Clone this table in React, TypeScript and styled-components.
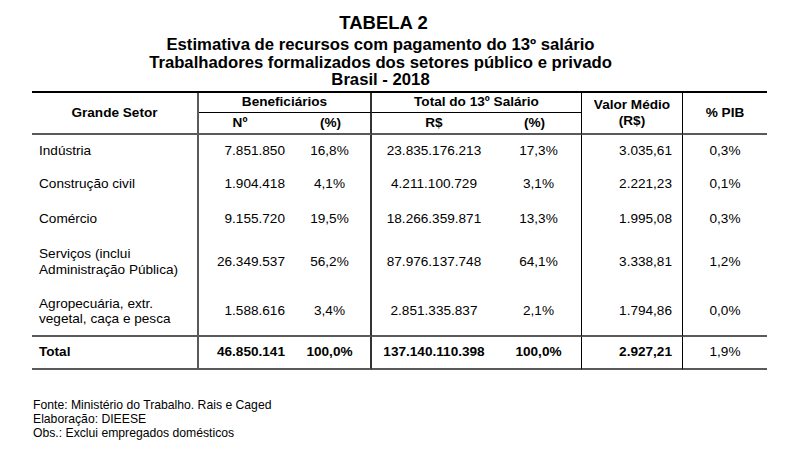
import React from 'react';
import styled, { createGlobalStyle } from 'styled-components';

const GlobalStyle = createGlobalStyle`
  html, body {
    margin: 0;
    padding: 0;
    background: #ffffff;
  }
  body {
    font-family: "Liberation Sans", Arial, sans-serif;
    color: #000000;
  }
`;

const Page = styled.div`
  width: 735px;
  margin-left: 32px;
  padding-top: 13px;
`;

const TitleBlock = styled.header`
  text-align: center;
  font-weight: bold;
  padding-right: 38px;
`;

const TitleMain = styled.div`
  font-size: 18.5px;
  line-height: 20px;
  margin-bottom: 3px;
  padding-left: 6px;
`;

const TitleLine = styled.div`
  font-size: 16.7px;
  line-height: 17.6px;
`;

const Grid = styled.div`
  display: grid;
  grid-template-columns: 167px 92px 81px 124px 86px 101px 84px;
  grid-template-rows: 20px 22px 32px 35px 34px 52px 49px 33px;
  border-top: 2px solid #000;
  margin-top: 2px;
  font-size: 13.6px;
  line-height: 15.6px;
`;

type Align = 'left' | 'right' | 'center';
type Line = 'gray' | 'dark' | 'thin' | 'black';

const lineCss = (l?: Line) => {
  switch (l) {
    case 'gray':
      return '2px solid #5a5a5a';
    case 'dark':
      return '2px solid #333333';
    case 'thin':
      return '1px solid #000000';
    case 'black':
      return '1px solid #000000';
    default:
      return 'none';
  }
};

const Cell = styled.div<{
  $align?: Align;
  $bold?: boolean;
  $rb?: Line;
  $bb?: Line;
  $padL?: number;
  $padR?: number;
  $colSpan?: number;
  $rowSpan?: number;
}>`
  box-sizing: border-box;
  display: flex;
  align-items: center;
  justify-content: ${(p) =>
    p.$align === 'left' ? 'flex-start' : p.$align === 'right' ? 'flex-end' : 'center'};
  text-align: ${(p) => p.$align || 'center'};
  font-weight: ${(p) => (p.$bold ? 'bold' : 'normal')};
  padding-left: ${(p) => p.$padL ?? 0}px;
  padding-right: ${(p) => p.$padR ?? 0}px;
  border-right: ${(p) => lineCss(p.$rb)};
  border-bottom: ${(p) => lineCss(p.$bb)};
  white-space: pre-line;
  grid-column: ${(p) => (p.$colSpan ? `span ${p.$colSpan}` : 'auto')};
  grid-row: ${(p) => (p.$rowSpan ? `span ${p.$rowSpan}` : 'auto')};
`;

const Footnotes = styled.footer`
  margin-top: 28px;
  padding-left: 1px;
  font-size: 12.2px;
  line-height: 14px;
`;

type ColSpec = { align: Align; padL?: number; padR?: number; rb?: Line };

const cols: ColSpec[] = [
  { align: 'left', padL: 7, rb: 'gray' },
  { align: 'right', padR: 6 },
  { align: 'center', padR: 2, rb: 'dark' },
  { align: 'center' },
  { align: 'center', rb: 'thin' },
  { align: 'right', padR: 10, rb: 'thin' },
  { align: 'center' },
];

const rows: string[][] = [
  ['Indústria', '7.851.850', '16,8%', '23.835.176.213', '17,3%', '3.035,61', '0,3%'],
  ['Construção civil', '1.904.418', '4,1%', '4.211.100.729', '3,1%', '2.221,23', '0,1%'],
  ['Comércio', '9.155.720', '19,5%', '18.266.359.871', '13,3%', '1.995,08', '0,3%'],
  ['Serviços (inclui\nAdministração Pública)', '26.349.537', '56,2%', '87.976.137.748', '64,1%', '3.338,81', '1,2%'],
  ['Agropecuária, extr.\nvegetal, caça e pesca', '1.588.616', '3,4%', '2.851.335.837', '2,1%', '1.794,86', '0,0%'],
];

const totalRow = ['Total', '46.850.141', '100,0%', '137.140.110.398', '100,0%', '2.927,21', '1,9%'];

export default function App() {
  return (
    <>
      <GlobalStyle />
      <Page>
        <TitleBlock>
          <TitleMain>TABELA 2</TitleMain>
          <TitleLine>Estimativa de recursos com pagamento do 13º salário</TitleLine>
          <TitleLine>Trabalhadores formalizados dos setores público e privado</TitleLine>
          <TitleLine>Brasil - 2018</TitleLine>
        </TitleBlock>

        <Grid>
          <Cell $bold $rowSpan={2} $rb="gray" $bb="gray">Grande Setor</Cell>
          <Cell $bold $colSpan={2} $rb="dark" $bb="black">Beneficiários</Cell>
          <Cell $bold $colSpan={2} $rb="thin" $bb="black">Total do 13º Salário</Cell>
          <Cell $bold $rowSpan={2} $rb="thin" $bb="gray">{'Valor Médio\n(R$)'}</Cell>
          <Cell $bold $rowSpan={2} $bb="gray">% PIB</Cell>

          <Cell $bold $bb="gray" $padR={10}>Nº</Cell>
          <Cell $bold $bb="gray" $rb="dark">(%)</Cell>
          <Cell $bold $bb="gray">R$</Cell>
          <Cell $bold $bb="gray" $padR={8} $rb="thin">(%)</Cell>

          {rows.map((row, ri) =>
            row.map((value, ci) => (
              <Cell
                key={`${ri}-${ci}`}
                $align={cols[ci].align}
                $padL={cols[ci].padL}
                $padR={cols[ci].padR}
                $rb={cols[ci].rb}
                $bb={ri === rows.length - 1 ? 'gray' : undefined}
              >
                {value}
              </Cell>
            ))
          )}

          {totalRow.map((value, ci) => (
            <Cell
              key={`t-${ci}`}
              $align={cols[ci].align}
              $padL={cols[ci].padL}
              $padR={cols[ci].padR}
              $rb={cols[ci].rb}
              $bb="gray"
              $bold={ci !== totalRow.length - 1}
            >
              {value}
            </Cell>
          ))}
        </Grid>

        <Footnotes>
          <div>Fonte: Ministério do Trabalho. Rais e Caged</div>
          <div>Elaboração: DIEESE</div>
          <div>Obs.: Exclui empregados domésticos</div>
        </Footnotes>
      </Page>
    </>
  );
}
